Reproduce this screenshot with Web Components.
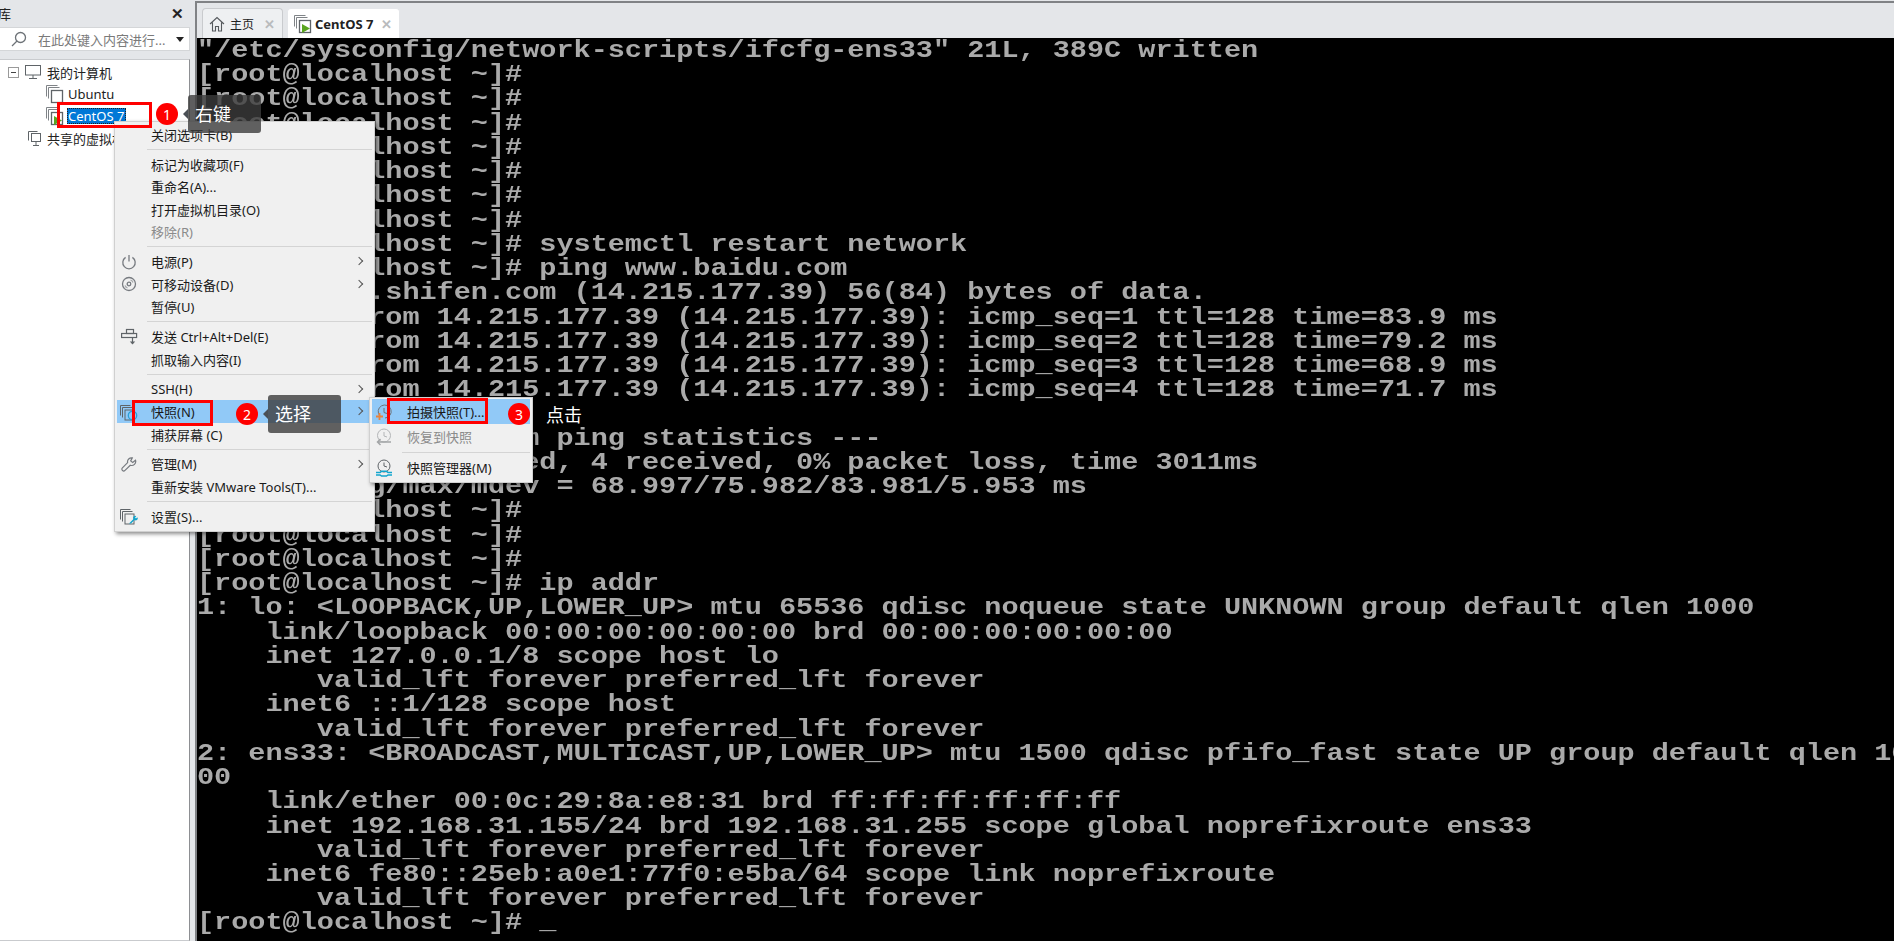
<!DOCTYPE html>
<html>
<head>
<meta charset="utf-8">
<style>
html,body{margin:0;padding:0;height:100%;overflow:hidden;background:#e4e6e9}
body{font-family:"Noto Sans","Noto Sans CJK SC",sans-serif}
</style>
</head>
<body>
<vm-window>
  <vm-library slot="side"></vm-library>
  <vm-tabs slot="tabs"></vm-tabs>
  <vm-terminal slot="main"></vm-terminal>
</vm-window>
<vm-menu></vm-menu>
<vm-submenu></vm-submenu>
<vm-box style="left:57px;top:102px;width:95px;height:26px"></vm-box>
<vm-box style="left:132px;top:400px;width:81px;height:26px"></vm-box>
<vm-box style="left:387px;top:398px;width:101px;height:26px"></vm-box>
<vm-note n="1" text="右键" style="left:156px;top:102px"></vm-note>
<vm-note n="2" text="选择" style="left:236px;top:402px"></vm-note>
<vm-note n="3" text="点击" plain style="left:508px;top:402px"></vm-note>

<script>
const ICONS = {
  vm:`<svg width="18" height="20" viewBox="0 0 18 20" fill="none" stroke="#5f6468"><path d="M.5 12.500v-11h11M2.500 14.500v-11h11" stroke="#7f8387"/><rect x="5.500" y="6.500" width="11" height="12" fill="#fff" stroke-width="1.300"/></svg>`,
  vmRun:`<svg width="18" height="20" viewBox="0 0 18 20" fill="none" stroke="#5f6468"><path d="M.5 12.500v-11h11M2.500 14.500v-11h11" stroke="#7f8387"/><rect x="5.500" y="6.500" width="11" height="12" fill="#fff" stroke-width="1.300"/><path d="M8 10v9l8-4.500z" fill="#5aa51f" stroke="none"/></svg>`,
  pc:`<svg width="18" height="16" viewBox="0 0 18 16" fill="none" stroke="#5f6468"><rect x="1.500" y="1.500" width="15" height="9.500"/><path d="M9 11v3M5 14.500h8"/></svg>`,
  share:`<svg width="18" height="18" viewBox="0 0 18 18" fill="none" stroke="#5f6468"><path d="M2.500 11.500v-9h9"/><rect x="5.500" y="4.500" width="9" height="8" fill="#fff"/><path d="M10 13v3M7 16.500h6"/></svg>`,
  power:`<svg width="16" height="16" viewBox="0 0 16 16" fill="none" stroke="#777b80" stroke-width="1.300"><path d="M4.600 3.400a6.200 6.200 0 1 0 6.800 0M8 1v6.500"/></svg>`,
  disc:`<svg width="16" height="16" viewBox="0 0 16 16" fill="none" stroke="#777b80" stroke-width="1.300"><circle cx="8" cy="8" r="6.500"/><circle cx="8" cy="8" r="1.800"/><path d="M4 9.500a4 4 0 0 0 2.500 2.500M12 6.500a4 4 0 0 0-2.500-2.500" stroke="#a5a8ab"/></svg>`,
  send:`<svg width="17" height="18" viewBox="0 0 17 18" fill="none" stroke="#5f6468" stroke-width="1.200"><rect x="5.500" y="1.500" width="7" height="4"/><rect x=".6" y="5.500" width="15" height="4"/><path d="M11.500 9.500v6"/><path d="M8.800 13.500h5.400l-2.700 3z" fill="#5f6468" stroke="none"/></svg>`,
  snap:`<svg width="18" height="18" viewBox="0 0 18 18" fill="none" stroke="#5f6468"><path d="M.5 12.500v-10h10M2.500 14.500v-10h10"/><rect x="5" y="7" width="9" height="10"/><circle cx="12.500" cy="12.500" r="4.200" stroke="#2a9fd6" stroke-width="1.300"/></svg>`,
  wrench:`<svg width="16" height="16" viewBox="0 0 16 16" fill="none" stroke="#777b80" stroke-width="1.200"><path d="M14.500 4.200l-2.800 2.300-2-1.600 1.600-3A4 4 0 0 0 6.600 6.600L1.400 11.800a1.800 1.800 0 0 0 2.600 2.600l5.300-5.200a4 4 0 0 0 5.200-5z"/></svg>`,
  set:`<svg width="18" height="18" viewBox="0 0 18 18" fill="none" stroke="#5f6468"><path d="M.5 12.500v-10h10M2.500 14.500v-10h10"/><rect x="5" y="7" width="9" height="10"/><path d="M9 16.500l4.500-4.500a2 2 0 0 1 2.800-2.800l-1.300 1.300 1 1 1.300-1.300a2 2 0 0 1-2.800 2.800L11 16.500z" fill="#12a5cd" stroke="none"/></svg>`,
  take:`<svg width="18" height="18" viewBox="0 0 18 18" fill="none" stroke="#6d7277"><path d="M5 13a6.500 6.500 0 1 1 5 2M9 5v4.500l3 1"/><path d="M1 13.500h7M4.500 10v7" stroke="#e8823c" stroke-width="1.800"/></svg>`,
  back:`<svg width="18" height="18" viewBox="0 0 18 18" fill="none" stroke="#b4b6b8"><circle cx="9" cy="7.500" r="6.500"/><path d="M9 4v4l3 1"/><path d="M2 14h14M5.500 11l-3 3 3 3" stroke="#a3a5a7" stroke-width="1.500"/></svg>`,
  mgr:`<svg width="18" height="18" viewBox="0 0 18 18" fill="none" stroke="#5f6468"><circle cx="9" cy="7" r="6"/><path d="M9 3.500V7l3 1"/><path d="M1 13.500h4l1.500-1.200h5l1.500 1.200h4M1 16h4l1.500 1h5L13 16h4" stroke="#12a5cd" stroke-width="1.500"/></svg>`
};

function define(name, css, html, init) {
  customElements.define(name, class extends HTMLElement {
    constructor() {
      super();
      this.attachShadow({mode:'open'});
    }
    connectedCallback() {
      this.shadowRoot.innerHTML = `<style>${css}</style>` + (typeof html === 'function' ? html(this) : html);
      if (init) init(this);
    }
  });
}

define('vm-window', `
:host{display:grid;grid-template-columns:190px 1fr;column-gap:5px;height:941px;background:#e4e6e9;overflow:hidden}
.main{display:flex;flex-direction:column;border-left:2px solid #808285;border-top:2px solid #808285;margin-top:1px;min-width:0}
`, `<slot name="side"></slot><div class="main"><slot name="tabs"></slot><slot name="main"></slot></div>`);

define('vm-library', `
:host{display:flex;flex-direction:column;height:941px;color:#222;font-size:13px}
.head{height:27px;display:flex;align-items:center;justify-content:space-between;padding:0 6px 0 0;box-sizing:border-box;white-space:nowrap}
.head span:first-child{margin-left:-2px}
.x{font:bold 15px "Liberation Sans",sans-serif;color:#222}
.search{height:24px;box-sizing:border-box;background:#fff;border:1px solid #d4d6d8;border-left:0;display:flex;align-items:center;gap:11px;padding-left:11px;color:#7a7a7a;margin-bottom:8px;position:relative;white-space:nowrap}
.search svg{flex:none}
.arrow{position:absolute;right:5px;top:9px;width:0;height:0;border:4.500px solid transparent;border-top:5px solid #222;border-bottom:0}
.tree{flex:1;background:#fff;border:1px solid #c9cbce;border-right-color:#8d8f92;border-left:0;padding-top:1px;position:relative}
.row{height:22px;display:flex;align-items:center;gap:5px;white-space:nowrap;overflow:hidden}
.minus{width:9px;height:9px;border:1px solid #9a9a9a;position:relative;margin-left:8px;flex:none}
.minus:after{content:"";position:absolute;left:2px;top:4px;width:5px;height:1px;background:#444}
.c1{padding-left:46px;gap:4px}
.c2{padding-left:26px;gap:3px}
.sel{background:#0078d7;color:#fff;padding:0 2px 0 1px;margin-left:-1px;line-height:16px;outline:1px dotted #222;outline-offset:-1px}
`, `
<div class="head"><span>库</span><span class="x">✕</span></div>
<div class="search">
  <svg width="16" height="16" viewBox="0 0 16 16" fill="none" stroke="#6d7277" stroke-width="1.300"><circle cx="9.500" cy="6.500" r="5"/><path d="M6 10l-5 5"/></svg>
  <span>在此处键入内容进行...</span><i class="arrow"></i>
</div>
<div class="tree">
  <div class="row"><i class="minus"></i>${ICONS.pc}<span>我的计算机</span></div>
  <div class="row c1">${ICONS.vm}<span>Ubuntu</span></div>
  <div class="row c1">${ICONS.vmRun}<span class="sel">CentOS 7</span></div>
  <div class="row c2">${ICONS.share}<span>共享的虚拟机</span></div>
</div>`);

define('vm-tabs', `
:host{display:flex;align-items:flex-end;gap:4px;height:35px;padding-left:5px;flex:none;font-size:13px;color:#222;white-space:nowrap}
.tab{height:30px;display:flex;align-items:center;background:#eef0f2;border:1px solid #c9cbce;border-bottom:0;border-radius:4px 4px 0 0;padding:0 6px;box-sizing:border-box;flex:none;position:relative}
.tab.on{background:#fff;border-color:#e4e6e9;font-weight:bold}
.tab svg{flex:none;margin-right:5px}
.tab.on svg{margin-right:3px}
.close{color:#b9bbbd;font:bold 13px "Liberation Sans",sans-serif;position:absolute;right:7px;top:8px}
`, `
<div class="tab" style="width:81px;font-size:12px">
  <svg width="16" height="16" viewBox="0 0 16 16" fill="none" stroke="#55595d" stroke-width="1.100"><path d="M1 8l7-6.500L15 8M3.500 6.500V15h3v-4.500h3V15h3V6.500"/></svg>
  <span>主页</span><span class="close">✕</span></div>
<div class="tab on" style="width:113px">${ICONS.vmRun}<span>CentOS 7</span><span class="close">✕</span></div>`);

const LINES = [
'"/etc/sysconfig/network-scripts/ifcfg-ens33" 21L, 389C written',
'[root@localhost ~]#','[root@localhost ~]#','[root@localhost ~]#','[root@localhost ~]#','[root@localhost ~]#','[root@localhost ~]#','[root@localhost ~]#',
'[root@localhost ~]# systemctl restart network',
'[root@localhost ~]# ping www.baidu.com',
'PING www.a.shifen.com (14.215.177.39) 56(84) bytes of data.',
'64 bytes from 14.215.177.39 (14.215.177.39): icmp_seq=1 ttl=128 time=83.9 ms',
'64 bytes from 14.215.177.39 (14.215.177.39): icmp_seq=2 ttl=128 time=79.2 ms',
'64 bytes from 14.215.177.39 (14.215.177.39): icmp_seq=3 ttl=128 time=68.9 ms',
'64 bytes from 14.215.177.39 (14.215.177.39): icmp_seq=4 ttl=128 time=71.7 ms',
'',
'--- www.a.shifen.com ping statistics ---',
'4 packets transmitted, 4 received, 0% packet loss, time 3011ms',
'rtt min/avg/max/mdev = 68.997/75.982/83.981/5.953 ms',
'[root@localhost ~]#','[root@localhost ~]#','[root@localhost ~]#',
'[root@localhost ~]# ip addr',
'1: lo: <LOOPBACK,UP,LOWER_UP> mtu 65536 qdisc noqueue state UNKNOWN group default qlen 1000',
'    link/loopback 00:00:00:00:00:00 brd 00:00:00:00:00:00',
'    inet 127.0.0.1/8 scope host lo',
'       valid_lft forever preferred_lft forever',
'    inet6 ::1/128 scope host',
'       valid_lft forever preferred_lft forever',
'2: ens33: <BROADCAST,MULTICAST,UP,LOWER_UP> mtu 1500 qdisc pfifo_fast state UP group default qlen 10',
'00',
'    link/ether 00:0c:29:8a:e8:31 brd ff:ff:ff:ff:ff:ff',
'    inet 192.168.31.155/24 brd 192.168.31.255 scope global noprefixroute ens33',
'       valid_lft forever preferred_lft forever',
'    inet6 fe80::25eb:a0e1:77f0:e5ba/64 scope link noprefixroute',
'       valid_lft forever preferred_lft forever',
'[root@localhost ~]# _'
];

define('vm-terminal', `
:host{display:block;flex:1;background:#000;overflow:hidden;min-width:0}
pre{margin:0;padding:1px 0 0 0;font:bold 23px/24.240px "Liberation Mono",monospace;color:#aaa;transform:scaleX(1.24);transform-origin:0 0;width:1400px;filter:blur(.35px)}
`, () => `<pre></pre>`, el => {
  el.shadowRoot.querySelector('pre').textContent = LINES.join('\n');
});

const item = (label, opt = {}) => `<div class="item${opt.hot ? ' hot' : ''}${opt.off ? ' off' : ''}">
  <span class="ic">${opt.icon || ''}</span><span class="lb">${label}</span>${opt.more ? '<span class="more"></span>' : ''}</div>`;

const MENU_CSS = `
:host{position:absolute;display:block;background:#f0f0f0;border:1px solid #d0d0d0;box-shadow:2px 2px 4px rgba(0,0,0,.45);font-size:13px;color:#1a1a1a;box-sizing:border-box}
.item{display:flex;align-items:center;position:relative;white-space:nowrap}
.ic{width:24px;padding-right:6px;flex:none;display:flex;justify-content:center;align-items:center}
.lb{padding-left:4px}
.hot{background:#91c9f7}
.off{color:#8b8b8b}
.more{position:absolute;right:12px;top:8px;width:5px;height:5px;border:solid #555;border-width:1px 1px 0 0;transform:rotate(45deg)}
hr{border:0;height:1px;background:#d4d4d4;margin:3.100px 2px 3.100px 30px}
`;

define('vm-menu', MENU_CSS + `:host{left:114px;top:121px;width:261px;height:411px;padding:1px 0 0 2px}
.item{height:22.600px}`, `
${item('关闭选项卡(B)')}<hr>
${item('标记为收藏项(F)')}${item('重命名(A)...')}${item('打开虚拟机目录(O)')}${item('移除(R)',{off:1})}<hr>
${item('电源(P)',{icon:ICONS.power,more:1})}${item('可移动设备(D)',{icon:ICONS.disc,more:1})}${item('暂停(U)')}<hr>
${item('发送 Ctrl+Alt+Del(E)',{icon:ICONS.send})}${item('抓取输入内容(I)')}<hr>
${item('SSH(H)',{more:1})}${item('快照(N)',{icon:ICONS.snap,more:1,hot:1})}${item('捕获屏幕 (C)')}<hr>
${item('管理(M)',{icon:ICONS.wrench,more:1})}${item('重新安装 VMware Tools(T)...')}<hr>
${item('设置(S)...',{icon:ICONS.set})}`);

define('vm-submenu', MENU_CSS + `:host{left:369px;top:397px;width:164px;height:86px;padding:1px 2px 0 2px}
.item{height:25px}.lb{padding-left:5px}hr{margin:2.500px 0 2.500px 30px}`, `
${item('拍摄快照(T)...',{icon:ICONS.take,hot:1})}${item('恢复到快照',{icon:ICONS.back,off:1})}<hr>
${item('快照管理器(M)',{icon:ICONS.mgr})}`);

define('vm-note', `
:host{position:absolute;display:flex;align-items:center;height:24px;color:#fff;font-size:18px;white-space:nowrap}
.n{width:22px;height:22px;border-radius:50%;background:#f00;color:#fff;font-size:14px;display:flex;align-items:center;justify-content:center;flex:none}
.tri{width:0;height:0;border:5px solid transparent;border-right:5px solid #4a4f55;border-left:0;margin-left:5px}
.lab{background:rgba(60,60,60,.8);border-radius:3px;width:73px;height:38px;line-height:38px;box-sizing:border-box;padding-left:7px;flex:none}
.pl{margin-left:16px}
`, el => {
  const n = el.getAttribute('n'), t = el.getAttribute('text');
  return el.hasAttribute('plain')
    ? `<span class="n">${n}</span><span class="pl">${t}</span>`
    : `<span class="n">${n}</span><i class="tri"></i><span class="lab">${t}</span>`;
});

define('vm-box', `:host{position:absolute;display:block;border:3px solid #f00;box-sizing:border-box}`, ``);
</script>
</body>
</html>
